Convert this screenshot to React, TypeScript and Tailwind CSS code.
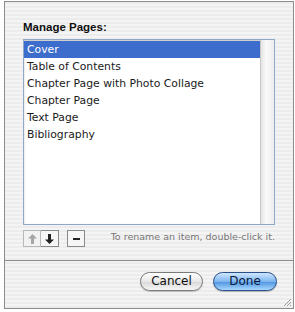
import React from "react";

const items = [
  "Cover",
  "Table of Contents",
  "Chapter Page with Photo Collage",
  "Chapter Page",
  "Text Page",
  "Bibliography",
];

function Arrow({ up, color }: { up?: boolean; color: string }) {
  return (
    <svg width="9" height="10" viewBox="0 0 9 10" style={{ transform: up ? "none" : "rotate(180deg)" }}>
      <path d="M4.5 0 L9 4.5 L6 4.5 L6 10 L3 10 L3 4.5 L0 4.5 Z" fill={color} />
    </svg>
  );
}

export default function App() {
  return (
    <div
      className="w-[295px] h-[312px] bg-white pt-[1px] pl-[4px] overflow-hidden"
      style={{ fontFamily: '"DejaVu Sans", Verdana, sans-serif' }}
    >
      <div className="w-[290px] h-[308px] border border-[#8c8c8c] bg-[repeating-linear-gradient(0deg,#ececec_0px,#ececec_2px,#f4f4f4_2px,#f4f4f4_4px)] flex flex-col relative">
        <div className="px-[18px] pt-[17px] flex flex-col">
          <div
            className="text-[11.5px] font-bold text-[#111] leading-[16px]"
            style={{ fontFamily: '"Liberation Sans", Arial, sans-serif' }}
          >
            Manage Pages:
          </div>
          <div className="mt-[4px] h-[186px] border border-[#8fa8c8] bg-white flex shadow-[inset_0_1px_2px_rgba(0,0,0,0.25)]">
            <div className="flex-1 pt-[1px]">
              {items.map((t, i) => (
                <div
                  key={t}
                  className={
                    "h-[17px] pl-[3px] text-[10.8px] leading-[17px] " +
                    (i === 0 ? "bg-[#3d6dcc] text-white" : "text-[#1a1a1a]")
                  }
                >
                  {t}
                </div>
              ))}
            </div>
            <div className="w-[14px] border-l border-[#c8c8c8] bg-[linear-gradient(90deg,#e4e4e4,#fafafa_40%,#eeeeee)]" />
          </div>
          <div className="mt-[5px] flex items-start">
            <div className="flex">
              <div className="w-[18px] h-[17px] border border-[#b8b8b8] bg-[#f2f2f2] flex items-center justify-center">
                <Arrow up color="#a6a6a6" />
              </div>
              <div className="w-[18px] h-[17px] border border-l-0 border-[#8a8a8a] bg-[#f6f6f6] flex items-center justify-center">
                <Arrow color="#222" />
              </div>
            </div>
            <div className="ml-[8px] w-[18px] h-[17px] border border-[#8a8a8a] bg-[#f6f6f6] flex items-center justify-center">
              <div className="w-[7px] h-[2px] bg-[#222]" />
            </div>
            <div className="flex-1 text-right text-[9.5px] leading-[12px] text-[#777] pt-[1px] whitespace-nowrap">
              To rename an item, double-click it.
            </div>
          </div>
        </div>
        <div className="mt-[13px] border-t border-[#8c8c8c]" />
        <div className="flex justify-end gap-[10px] pr-[16px] pt-[11px]">
          <div className="w-[63px] h-[19px] rounded-full border border-[#7a7a7a] bg-[linear-gradient(180deg,#ffffff,#e8e8e8_50%,#d8d8d8_51%,#f6f6f6)] text-[12px] leading-[17px] text-center text-[#111] shadow-[0_1px_1px_rgba(0,0,0,0.2)]">
            Cancel
          </div>
          <div className="w-[64px] h-[19px] rounded-full border border-[#2a4f8c] bg-[linear-gradient(180deg,#cfe6ff,#7fb6f0_50%,#4c92e0_51%,#a8d8ff)] text-[12px] leading-[17px] text-center text-[#0b1a3a] shadow-[0_1px_1px_rgba(0,0,0,0.25)]">
            Done
          </div>
        </div>
        <svg className="absolute right-[1px] bottom-[1px]" width="10" height="10" viewBox="0 0 10 10">
          <path d="M9 2 L2 9 M9 5 L5 9 M9 8 L8 9" stroke="#9a9a9a" strokeWidth="1" />
        </svg>
      </div>
    </div>
  );
}
